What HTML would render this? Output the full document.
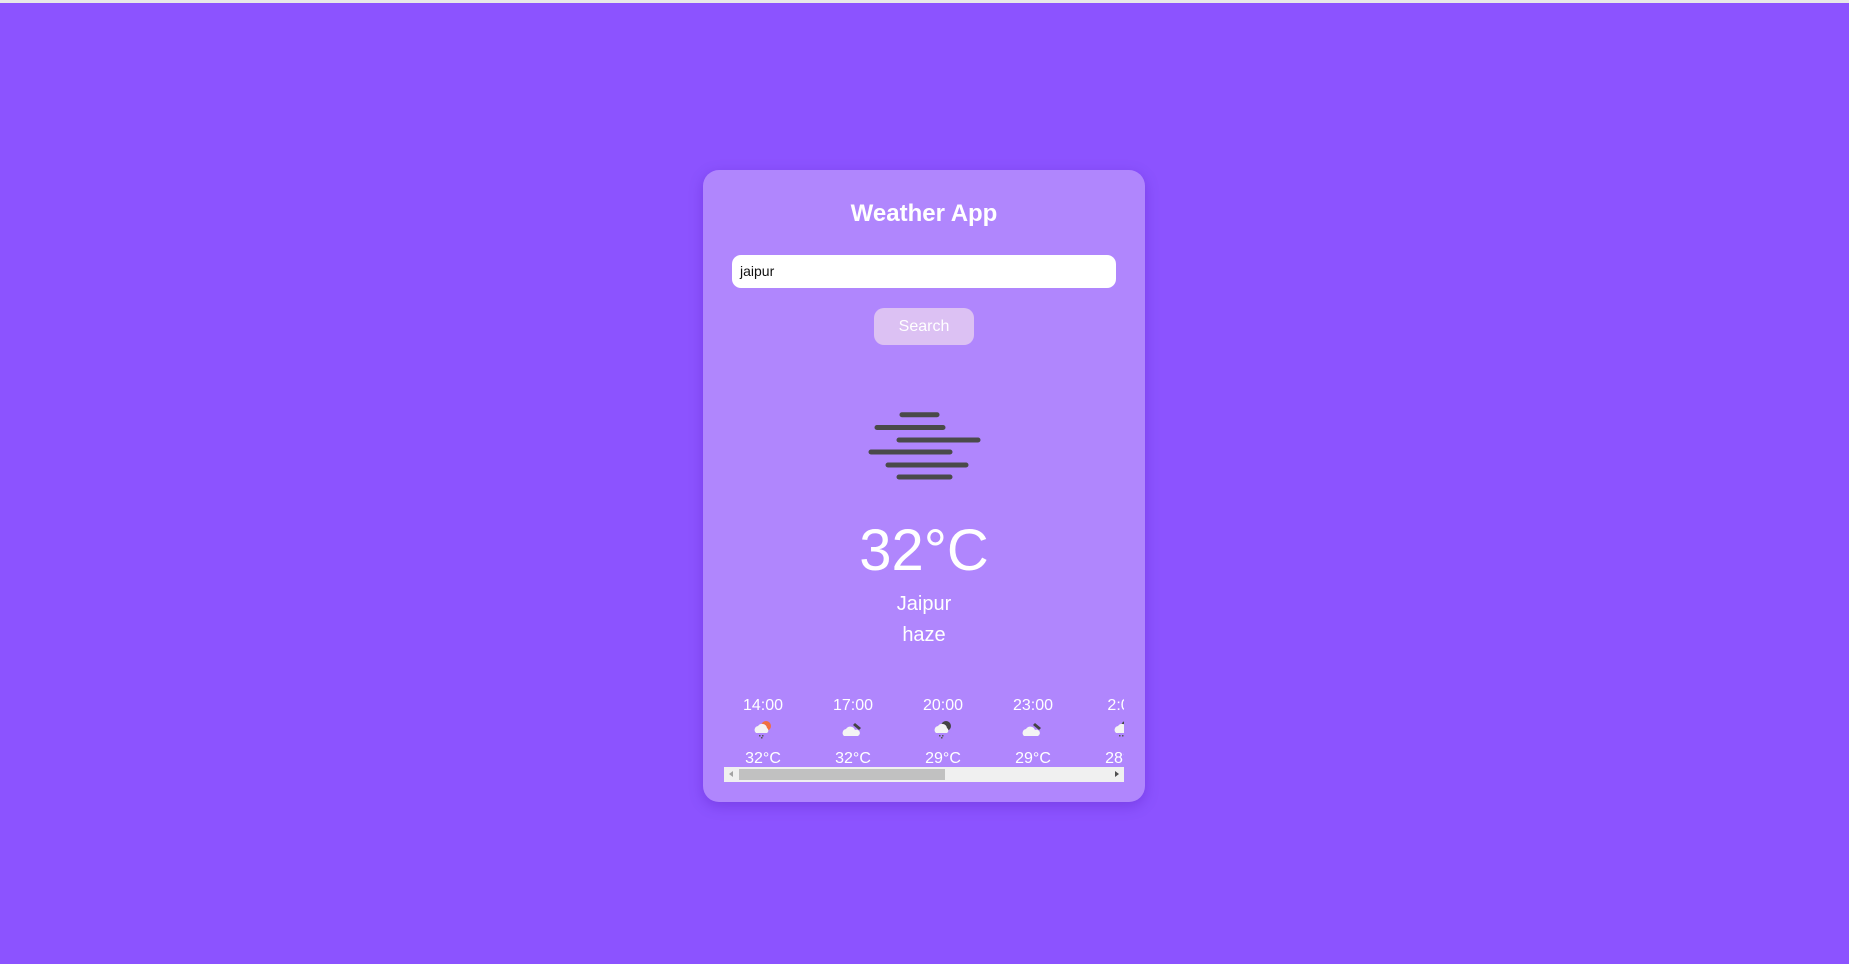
<!DOCTYPE html>
<html><head><meta charset="utf-8"><style>
html,body{margin:0;padding:0;}
body{width:1849px;height:964px;background:#8c53ff;font-family:"Liberation Sans",Arial,sans-serif;position:relative;overflow:hidden;border-top:3px solid #e8e8e8;box-sizing:border-box;}
.card{position:absolute;left:703px;top:167px;width:442px;height:632px;background:#b086fd;border-radius:16px;box-shadow:0 4px 14px rgba(60,0,160,0.25);}
.abs{position:absolute;}
h1{position:absolute;left:0;width:100%;top:30px;margin:0;text-align:center;color:#fff;font-size:24px;font-weight:bold;}
.inp{left:29px;top:85px;width:384px;height:33px;background:#fff;border-radius:9px;font-size:14px;line-height:33px;padding-left:8px;box-sizing:border-box;color:#111;}
.btn{left:171px;top:138px;width:100px;height:37px;background:#dcc1f3;border-radius:10px;color:#fff;font-size:16px;text-align:center;line-height:37px;}
.c{left:0;width:100%;text-align:center;color:#fff;}
.hr{position:absolute;width:60px;text-align:center;color:#fff;font-size:16px;}
.hr .t{height:18px;}
.hr .i{height:26px;margin-top:2px;}
.hr .d{margin-top:7px;}
.sb{left:21px;top:597px;width:400px;height:15px;background:#f0f0f0;}
</style></head><body>
<div class="card">
<h1>Weather App</h1>
<div class="abs inp">jaipur</div>
<div class="abs btn">Search</div>
<svg class="abs" style="left:0;top:-1px" width="442" height="330">
<g stroke="#4a4a4a" stroke-width="5" stroke-linecap="round">
<line x1="199" y1="245.7" x2="234" y2="245.7"/>
<line x1="174" y1="258.5" x2="240" y2="258.5"/>
<line x1="196" y1="271" x2="275" y2="271"/>
<line x1="168" y1="283" x2="247" y2="283"/>
<line x1="185" y1="296" x2="263" y2="296"/>
<line x1="196" y1="308" x2="247" y2="308"/>
</g></svg>
<div class="abs c" style="top:346px;font-size:58px;line-height:70px;">32°C</div>
<div class="abs c" style="top:421px;font-size:20px;line-height:26px;">Jaipur</div>
<div class="abs c" style="top:452px;font-size:20px;line-height:26px;">haze</div>
<div class="abs" style="left:21px;top:0;width:400px;height:640px;overflow:hidden;">
<div class="hr" style="left:9px;top:527px"><div class="t">14:00</div><div class="i"><svg width="24" height="24" viewBox="0 0 24 24"><circle cx="15" cy="9" r="5" fill="#f07040"/><path d="M5 16a4 4 0 0 1 2-7 5 5 0 0 1 9 2 3 3 0 0 1 0 5z" fill="#f4f4f4"/><g fill="#555"><rect x="8" y="18" width="1.5" height="1.5"/><rect x="11" y="18" width="1.5" height="1.5"/><rect x="10" y="20" width="1.5" height="1.5"/></g></svg></div><div class="d">32°C</div></div>
<div class="hr" style="left:99px;top:527px"><div class="t">17:00</div><div class="i"><svg width="24" height="24" viewBox="0 0 24 24"><path d="M14 6l6 5-2 2-6-5z" fill="#444"/><path d="M3 19a4 4 0 0 1 2-7 5 5 0 0 1 9 1 3 3 0 0 1 3 6z" fill="#f4f4f4"/></svg></div><div class="d">32°C</div></div>
<div class="hr" style="left:189px;top:527px"><div class="t">20:00</div><div class="i"><svg width="24" height="24" viewBox="0 0 24 24"><circle cx="15" cy="9" r="5" fill="#444"/><path d="M5 16a4 4 0 0 1 2-7 5 5 0 0 1 9 2 3 3 0 0 1 0 5z" fill="#f4f4f4"/><g fill="#555"><rect x="8" y="18" width="1.5" height="1.5"/><rect x="11" y="18" width="1.5" height="1.5"/><rect x="10" y="20" width="1.5" height="1.5"/></g></svg></div><div class="d">29°C</div></div>
<div class="hr" style="left:279px;top:527px"><div class="t">23:00</div><div class="i"><svg width="24" height="24" viewBox="0 0 24 24"><path d="M14 6l6 5-2 2-6-5z" fill="#444"/><path d="M3 19a4 4 0 0 1 2-7 5 5 0 0 1 9 1 3 3 0 0 1 3 6z" fill="#f4f4f4"/></svg></div><div class="d">29°C</div></div>
<div class="hr" style="left:369px;top:527px"><div class="t">2:00</div><div class="i"><svg width="24" height="24" viewBox="0 0 24 24"><circle cx="15" cy="9" r="5" fill="#444"/><path d="M5 16a4 4 0 0 1 2-7 5 5 0 0 1 9 2 3 3 0 0 1 0 5z" fill="#f4f4f4"/><g fill="#555"><rect x="8" y="18" width="1.5" height="1.5"/><rect x="11" y="18" width="1.5" height="1.5"/></g></svg></div><div class="d">28°C</div></div>
</div>
<div class="abs sb">
<div class="abs" style="left:15px;top:2px;width:206px;height:11px;background:#c1c1c1;"></div>
<div class="abs" style="left:5px;top:4px;width:0;height:0;border-top:3.5px solid transparent;border-bottom:3.5px solid transparent;border-right:4px solid #a3a3a3;"></div>
<div class="abs" style="left:391px;top:4px;width:0;height:0;border-top:3.5px solid transparent;border-bottom:3.5px solid transparent;border-left:4px solid #505050;"></div>
</div>
</div>
</body></html>
